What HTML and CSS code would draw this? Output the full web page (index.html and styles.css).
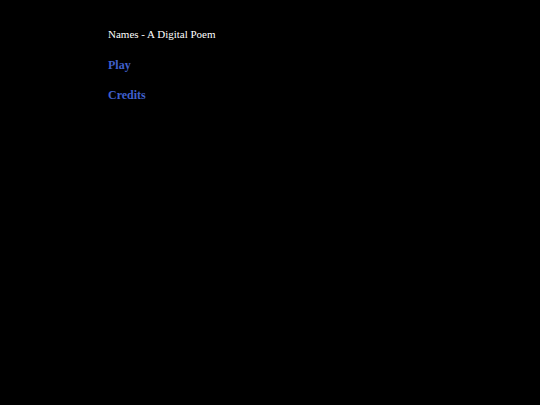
FILE: index.html
```html
<!DOCTYPE html>
<html>
<head>
<meta charset="utf-8">
<link rel="stylesheet" href="styles.css">
</head>
<body>
<div class="menu">
  <div class="title">Names - A Digital Poem</div>
  <a class="link" href="#">Play</a>
  <a class="link" href="#">Credits</a>
</div>
</body>
</html>
```
FILE: styles.css
```css
html, body {
  margin: 0;
  background: #000;
}
body {
  font-family: "Liberation Serif", "Times New Roman", serif;
  font-size: 11px;
}
.menu {
  display: flex;
  flex-direction: column;
  gap: 16px;
  padding: 28px 0 0 108px;
}
.title {
  color: #fff;
  line-height: 13px;
  margin-bottom: 1px;
}
.link {
  color: #3f5fcc;
  font-size: 12px;
  font-weight: bold;
  text-decoration: none;
  line-height: 14px;
}
```
